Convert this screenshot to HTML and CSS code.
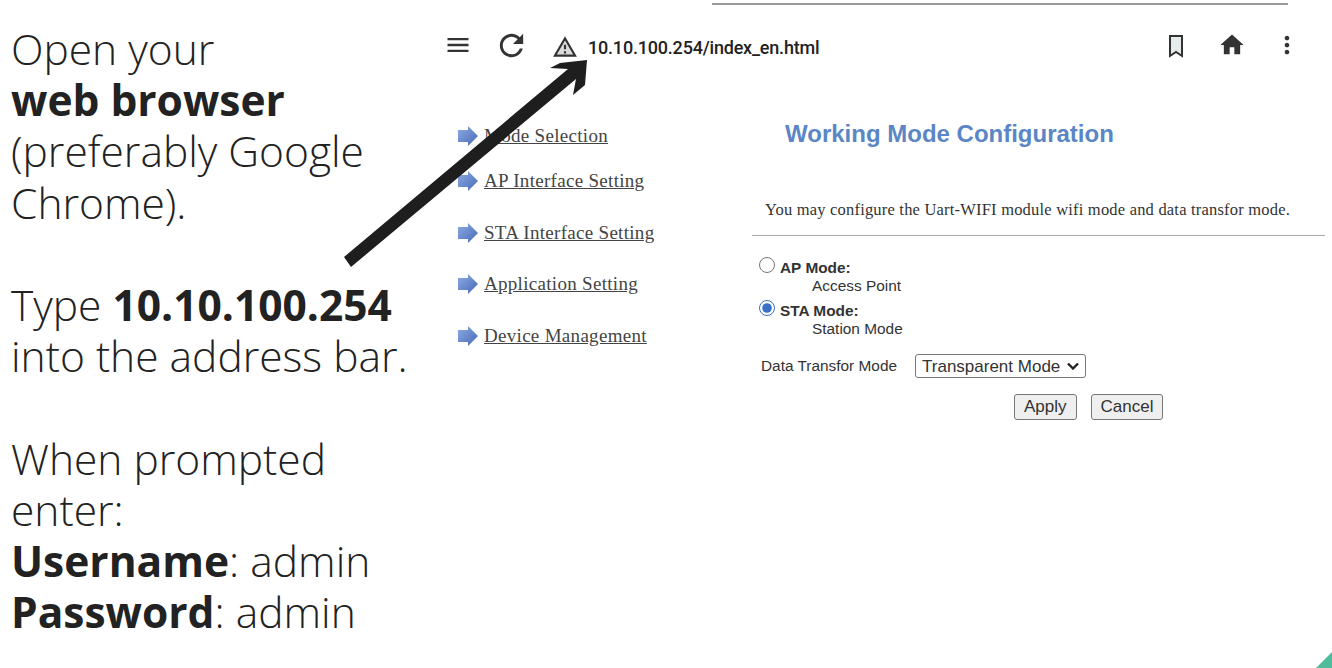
FILE: index.html
```html
<!DOCTYPE html>
<html lang="en">
<head>
    <meta charset="UTF-8">
    <meta name="viewport" content="width=device-width, initial-scale=1.0">
    <title>Open your web browser</title>
    <link rel="stylesheet" href="styles.css">
</head>
<body>
    <div class="slide">
        <div class="intro">
            <p>Open your<br><b>web browser</b><br>(preferably Google Chrome).</p>
            <p>Type <b>10.10.100.254</b> into the address bar.</p>
            <p>When prompted enter:<br><b>Username</b>: admin<br><b>Password</b>: admin</p>
        </div>

        <div class="shot">
            <div class="shot-edge"></div>

            <div class="toolbar">
                <svg class="icon-menu" viewBox="0 0 24 24"><path d="M3 18h18v-2H3v2zm0-5h18v-2H3v2zm0-7v2h18V6H3z"/></svg>
                <svg class="icon-reload" viewBox="0 0 24 24"><path d="M17.65 6.35C16.2 4.9 14.21 4 12 4c-4.42 0-7.99 3.58-7.99 8s3.57 8 7.99 8c3.73 0 6.84-2.55 7.73-6h-2.08c-.82 2.33-3.04 4-5.65 4-3.31 0-6-2.69-6-6s2.69-6 6-6c1.66 0 3.14.69 4.22 1.78L13 11h7V4l-2.35 2.35z"/></svg>
                <svg class="icon-warning" viewBox="0 0 24 24"><path fill="#dcdcdc" d="M12 4L3 20h18z"/><path d="M12 5.99L19.53 19H4.47L12 5.99M12 2L1 21h22L12 2zm1 14h-2v2h2v-2zm0-6h-2v4h2v-4z"/></svg>
                <span class="url">10.10.100.254/index_en.html</span>
                <svg class="icon-bookmark" viewBox="0 0 14 23"><path d="M1 1h12v20l-6-4-6 4z" fill="#e6ecec" stroke="#333" stroke-width="2"/></svg>
                <svg class="icon-home" viewBox="0 0 24 24"><path d="M10 20v-6h4v6h5v-8h3L12 3 2 12h3v8z"/></svg>
                <svg class="icon-more" viewBox="0 0 24 24"><path d="M12 8c1.1 0 2-.9 2-2s-.9-2-2-2-2 .9-2 2 .9 2 2 2zm0 2c-1.1 0-2 .9-2 2s.9 2 2 2 2-.9 2-2-.9-2-2-2zm0 6c-1.1 0-2 .9-2 2s.9 2 2 2 2-.9 2-2-.9-2-2-2z"/></svg>
            </div>

            <div class="device-page">
                <ul class="side-menu">
                    <li><svg viewBox="0 0 20 20"><defs><linearGradient id="arrow-blue" x1="0" y1="0" x2="1" y2="1"><stop offset="0" stop-color="#8fabe4"/><stop offset="1" stop-color="#4569b5"/></linearGradient></defs><path fill="url(#arrow-blue)" d="M0 4h10V0l10 10-10 10v-4H0z"/></svg><a href="#">Mode Selection</a></li>
                    <li><svg viewBox="0 0 20 20"><path fill="url(#arrow-blue)" d="M0 4h10V0l10 10-10 10v-4H0z"/></svg><a href="#">AP Interface Setting</a></li>
                    <li><svg viewBox="0 0 20 20"><path fill="url(#arrow-blue)" d="M0 4h10V0l10 10-10 10v-4H0z"/></svg><a href="#">STA Interface Setting</a></li>
                    <li><svg viewBox="0 0 20 20"><path fill="url(#arrow-blue)" d="M0 4h10V0l10 10-10 10v-4H0z"/></svg><a href="#">Application Setting</a></li>
                    <li><svg viewBox="0 0 20 20"><path fill="url(#arrow-blue)" d="M0 4h10V0l10 10-10 10v-4H0z"/></svg><a href="#">Device Management</a></li>
                </ul>

                <div class="config">
                    <h1>Working Mode Configuration</h1>
                    <p class="lead">You may configure the Uart-WIFI module wifi mode and data transfor mode.</p>
                    <hr>
                    <div class="mode">
                        <label><input type="radio" name="mode"><b>AP Mode:</b></label>
                        <span>Access Point</span>
                    </div>
                    <div class="mode">
                        <label><input type="radio" name="mode" checked><b>STA Mode:</b></label>
                        <span>Station Mode</span>
                    </div>
                    <div class="transfer">
                        <span>Data Transfor Mode</span>
                        <select><option>Transparent Mode</option></select>
                    </div>
                    <div class="actions">
                        <button type="button">Apply</button>
                        <button type="button">Cancel</button>
                    </div>
                </div>
            </div>
        </div>

        <!-- arrow pointing at the address bar, drawn over the screenshot -->
        <svg class="pointer" viewBox="0 0 1332 668"><path d="M344 257L568 69 550 68 560 63 587 60 585 85 573 95 576 79 351 267z"/></svg>
        <svg class="corner" viewBox="0 0 16 16"><path d="M16 0V16H0z"/></svg>
    </div>
</body>
</html>
```

FILE: styles.css
```css
body {
    margin: 0;
    background-color: #fff;
    font-family: "Liberation Sans", Arial, sans-serif;
    color: #333;
}

.slide {
    position: relative;
    display: flex;
    width: 1332px;
    height: 668px;
    overflow: hidden;
}

/* left text column */
.intro {
    width: 419px;
    padding: 23px 0 0 11px;
    box-sizing: content-box;
    font-family: "Open Sans", sans-serif;
    font-size: 42.5px;
    font-weight: 300;
    line-height: 51.2px;
    color: #222;
}

.intro p {
    margin: 0 0 51.2px;
}

.intro b {
    font-weight: 700;
}

/* browser screenshot on the right */
.shot {
    flex: 1;
    display: flex;
    flex-direction: column;
}

.shot-edge {
    width: 576px;
    height: 2px;
    margin: 3px 0 0 282px;
    background-color: #999;
}

.toolbar {
    display: flex;
    align-items: center;
    height: 80px;
    fill: #333;
}

.toolbar svg {
    flex: none;
}

.icon-menu {
    width: 28px;
    height: 28px;
    margin-left: 14px;
}

.icon-reload {
    width: 35px;
    height: 35px;
    margin-left: 22px;
}

.icon-warning {
    width: 26px;
    height: 26px;
    margin: 3px 0 0 23px;
}

.url {
    margin: 4px 0 0 10px;
    font-family: Roboto, sans-serif;
    font-size: 18px;
    font-weight: 500;
    letter-spacing: -0.2px;
    color: #222;
}

.icon-bookmark {
    width: 14px;
    height: 23px;
    margin: 2px 0 0 auto;
}

.icon-home {
    width: 28px;
    height: 28px;
    margin-left: 35px;
}

.icon-more {
    width: 28px;
    height: 28px;
    margin: 0 31px 0 27px;
}

.device-page {
    display: flex;
}

.side-menu {
    width: 294px;
    margin: 0 0 0 28px;
    padding: 37px 0 0;
    list-style: none;
    font-family: "Liberation Serif", serif;
    font-size: 19px;
    letter-spacing: 0.3px;
}

.side-menu li {
    display: flex;
    align-items: center;
    gap: 6px;
    height: 28px;
    margin-bottom: 23.6px;
}

.side-menu li:first-child {
    margin-bottom: 17px;
}

.side-menu svg {
    width: 20px;
    height: 20px;
}

.side-menu a {
    color: #444;
}

.config {
    width: 573px;
}

.config h1 {
    margin: 34px 0 0 33px;
    font-size: 24px;
    line-height: 30px;
    color: #5b86c5;
}

.lead {
    margin: 51px 0 0 13px;
    font-family: "Liberation Serif", serif;
    font-size: 16.5px;
    letter-spacing: 0.2px;
    line-height: 20px;
}

.config hr {
    height: 1px;
    margin: 15px 0 0;
    border: none;
    background-color: #aaa;
}

.mode {
    display: flex;
    flex-direction: column;
    margin: 22.5px 0 0 7px;
    font-size: 15.4px;
    line-height: 17px;
}

.mode + .mode {
    margin-top: 8px;
}

.mode label {
    display: flex;
    align-items: center;
}

.mode input {
    width: 16px;
    height: 16px;
    margin: -4px 5px 0 0;
    accent-color: #3a6fc8;
}

.mode span {
    margin: 1px 0 0 53px;
}

.transfer {
    display: flex;
    align-items: center;
    gap: 18px;
    margin: 17.5px 0 0 9px;
    font-size: 15.4px;
}

/* native arrow is too thin, so it's drawn as a background */
.transfer select {
    appearance: none;
    width: 171px;
    height: 24px;
    padding: 0 0 0 6px;
    font-family: "Liberation Sans", sans-serif;
    font-size: 17px;
    color: #333;
    background: #fff url("data:image/svg+xml,%3Csvg xmlns='http://www.w3.org/2000/svg' viewBox='0 0 12 8'%3E%3Cpath d='M1 1.5l5 5 5-5' fill='none' stroke='%23222' stroke-width='2.4'/%3E%3C/svg%3E") no-repeat right 6px center / 12px 8px;
    border: 1px solid #777;
    border-radius: 3px;
}

.actions {
    display: flex;
    gap: 14px;
    margin: 15.5px 0 0 262px;
}

.actions button {
    height: 26px;
    padding: 0 9px;
    font-family: "Liberation Sans", sans-serif;
    font-size: 17px;
    color: #333;
    background-color: #efefef;
    border: 1px solid #777;
    border-radius: 3px;
}

.pointer {
    position: absolute;
    left: 0;
    top: 0;
    width: 1332px;
    height: 668px;
    fill: #1e1e1e;
}

.corner {
    position: absolute;
    right: 0;
    bottom: 0;
    width: 16px;
    height: 16px;
    fill: #4fbc9c;
}
```
